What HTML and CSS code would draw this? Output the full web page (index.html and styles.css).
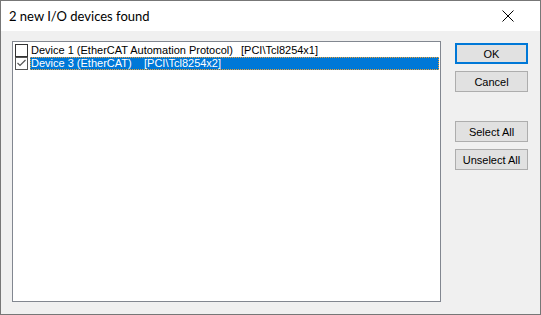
FILE: index.html
```html
<!DOCTYPE html>
<html lang="en">
<head>
    <meta charset="UTF-8">
    <title>2 new I/O devices found</title>
    <link rel="stylesheet" href="styles.css">
</head>
<body>
    <div class="window">
        <div class="title-bar">
            <span class="title">2 new I/O devices found</span>
            <svg class="close" width="12" height="12" viewBox="0 0 12 12">
                <path d="M0.5 0.5 L11.5 11.5 M11.5 0.5 L0.5 11.5" stroke="#000" stroke-width="1" fill="none"/>
            </svg>
        </div>
        <div class="content">
            <div class="list">
                <div class="row">
                    <span class="check"></span>
                    <span class="label"><span class="name n1">Device 1 (EtherCAT Automation Protocol)</span>[PCI\Tcl8254x1]</span>
                </div>
                <div class="row">
                    <span class="check checked">
                        <svg width="11" height="11" viewBox="0 0 11 11">
                            <path d="M1.5 5 L4 7.5 L9.5 2" stroke="#555" stroke-width="1.2" fill="none"/>
                        </svg>
                    </span>
                    <span class="label selected"><span class="name n2">Device 3 (EtherCAT)</span>[PCI\Tcl8254x2]</span>
                </div>
            </div>
            <div class="buttons">
                <button class="btn default">OK</button>
                <button class="btn">Cancel</button>
                <div class="spacer"></div>
                <button class="btn">Select All</button>
                <button class="btn">Unselect All</button>
            </div>
        </div>
    </div>
</body>
</html>
```

FILE: styles.css
```css
* {
    margin: 0;
    padding: 0;
    box-sizing: border-box;
}

body {
    background: #f0f0f0;
    font-family: "Liberation Sans", Arial, sans-serif;
}

.window {
    width: 541px;
    height: 315px;
    border: 1px solid #777;
    background: #f0f0f0;
    display: flex;
    flex-direction: column;
}

.title-bar {
    height: 30px;
    background: #fff;
    display: flex;
    align-items: center;
    justify-content: space-between;
    padding: 0 26px 0 8px;
}

.title {
    font-family: Lato, "Liberation Sans", sans-serif;
    font-size: 13px;
    color: #000;
}

.close {
    display: block;
}

.content {
    display: flex;
    padding: 10px 0 0 11px;
}

.list {
    width: 429px;
    height: 261px;
    background: #fff;
    border: 1px solid #828790;
    padding: 2px 1px 0 2px;
}

.row {
    display: flex;
    height: 13px;
    font-size: 11px;
    line-height: 13px;
    color: #000;
}

.check {
    width: 13px;
    height: 13px;
    border: 1px solid #333;
    background: #fff;
    margin-right: 2px;
    flex: none;
}

.check.checked {
    border-color: #555;
}

.check svg {
    display: block;
}

.label {
    flex: 1;
    white-space: nowrap;
    padding-left: 1px;
}

.label.selected {
    background: #0078d7;
    color: #fff;
    outline: 1px dotted #f0a030;
    outline-offset: -1px;
}

.name {
    display: inline-block;
}

.n1 {
    width: 210px;
}

.n2 {
    width: 113px;
}

.buttons {
    display: flex;
    flex-direction: column;
    gap: 7px;
    margin-left: 14px;
    padding-top: 2px;
}

.spacer {
    height: 15px;
}

.btn {
    width: 73px;
    height: 21px;
    background: #e1e1e1;
    border: 1px solid #adadad;
    font-family: "Liberation Sans", Arial, sans-serif;
    font-size: 11px;
    color: #000;
}

.btn.default {
    border: 2px solid #0078d7;
}
```
